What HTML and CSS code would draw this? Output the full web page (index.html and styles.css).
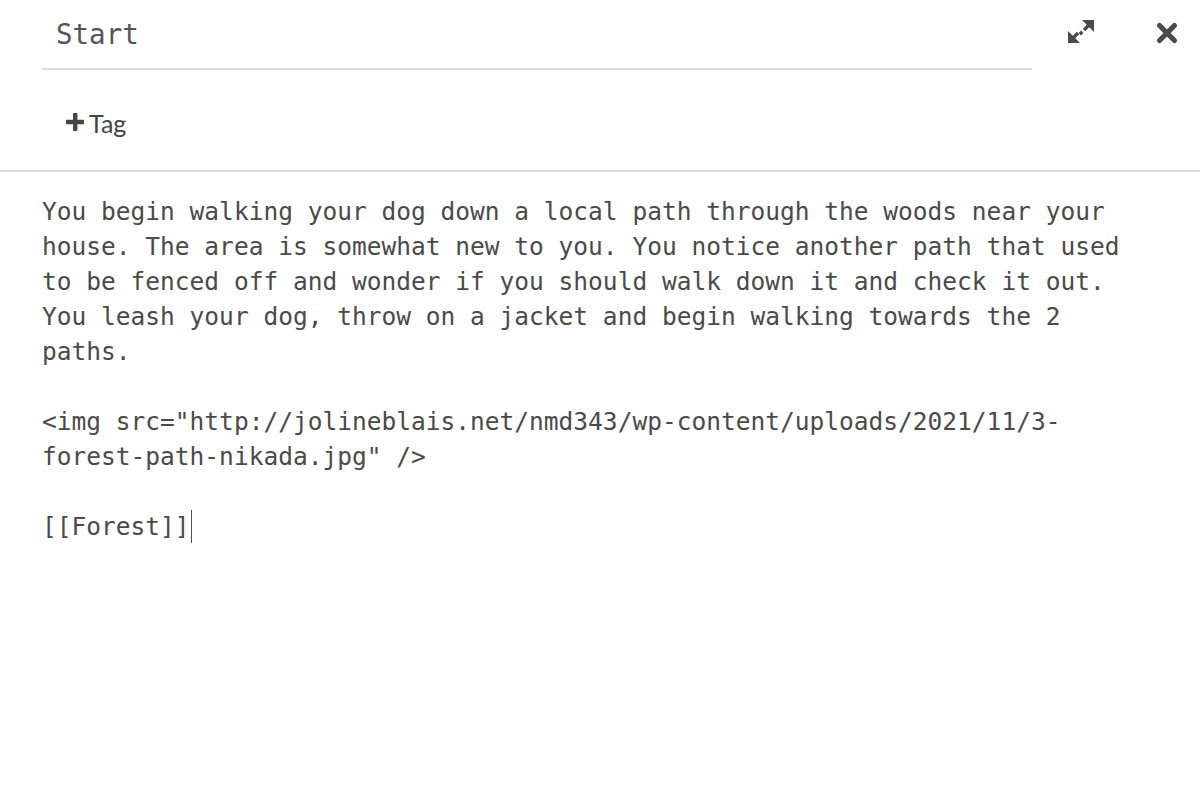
FILE: index.html
```html
<!DOCTYPE html>
<html>
<head>
<meta charset="utf-8">
<link rel="stylesheet" href="styles.css">
</head>
<body>
<div class="dialog">
  <div class="header">
    <div class="title">Start</div>
    <div class="actions">
      <button class="icon-btn expand" aria-label="Maximize">
        <svg width="28" height="26" viewBox="0 0 28 26">
          <polygon points="15,1 27,1 27,13" fill="#4a4a4a"/>
          <line x1="21.5" y1="6.5" x2="17" y2="11" stroke="#4a4a4a" stroke-width="3.4"/>
          <line x1="15.2" y1="12.8" x2="12.8" y2="15.2" stroke="#4a4a4a" stroke-width="3.4"/>
          <polygon points="1,12 1,24 13,24" fill="#4a4a4a"/>
          <line x1="6.5" y1="18.5" x2="11" y2="14" stroke="#4a4a4a" stroke-width="3.4"/>
        </svg>
      </button>
      <button class="icon-btn close" aria-label="Close">
        <svg width="24" height="24" viewBox="0 0 24 24">
          <line x1="4.5" y1="4.5" x2="19.5" y2="19.5" stroke="#4a4a4a" stroke-width="5.2" stroke-linecap="round"/>
          <line x1="19.5" y1="4.5" x2="4.5" y2="19.5" stroke="#4a4a4a" stroke-width="5.2" stroke-linecap="round"/>
        </svg>
      </button>
    </div>
  </div>
  <div class="tags">
    <button class="tag-btn">
      <svg width="18" height="18" viewBox="0 0 18 18">
        <rect x="7" y="0" width="4.4" height="18" rx="1" fill="#444"/>
        <rect x="0" y="6.8" width="18" height="4.4" rx="1" fill="#444"/>
      </svg>
      <span>Tag</span>
    </button>
  </div>
  <div class="passage">You begin walking your dog down a local path through the woods near your
house. The area is somewhat new to you. You notice another path that used
to be fenced off and wonder if you should walk down it and check it out.
You leash your dog, throw on a jacket and begin walking towards the 2
paths.

&lt;img src="http://jolineblais.net/nmd343/wp-content/uploads/2021/11/3-
forest-path-nikada.jpg" /&gt;

[[Forest]]<span class="caret"></span></div>
</div>
</body>
</html>
```

FILE: styles.css
```css
html, body {
  margin: 0;
  padding: 0;
  background: #ffffff;
}

.dialog {
  width: 1200px;
  height: 792px;
  background: #fff;
  display: flex;
  flex-direction: column;
}

.header {
  display: flex;
  align-items: flex-start;
  padding-left: 42px;
  height: 70px;
}

.title {
  width: 976px;
  height: 68px;
  padding-left: 14px;
  border-bottom: 2px solid #dcdcdc;
  display: flex;
  align-items: center;
  font-family: "DejaVu Sans Mono", "Liberation Mono", monospace;
  font-size: 27.5px;
  color: #555;
}

.actions {
  display: flex;
  align-items: center;
  padding-left: 35px;
  gap: 60px;
  padding-top: 18px;
}

.icon-btn {
  border: 0;
  background: none;
  padding: 0;
  margin: 0;
  display: flex;
  cursor: pointer;
}

.close {
  margin-top: 3px;
}

.tags {
  height: 100px;
  border-bottom: 2px solid #dcdcdc;
  display: flex;
  align-items: center;
  padding-left: 66px;
}

.tag-btn {
  border: 0;
  background: none;
  padding: 0;
  display: flex;
  align-items: center;
  gap: 5px;
  font-family: Lato, "Noto Sans", sans-serif;
  font-size: 25px;
  color: #444;
  margin-top: 6px;
}

.tag-btn svg {
  margin-top: -3px;
}

.passage {
  padding: 22px 0 0 42px;
  font-family: "DejaVu Sans Mono", "Liberation Mono", monospace;
  font-size: 24.52px;
  line-height: 35px;
  color: #4a4a4a;
  white-space: pre-wrap;
}

.caret {
  display: inline-block;
  width: 0;
  height: 33px;
  border-left: 1.5px solid #555;
  vertical-align: -8px;
  margin-left: 1px;
}
```
